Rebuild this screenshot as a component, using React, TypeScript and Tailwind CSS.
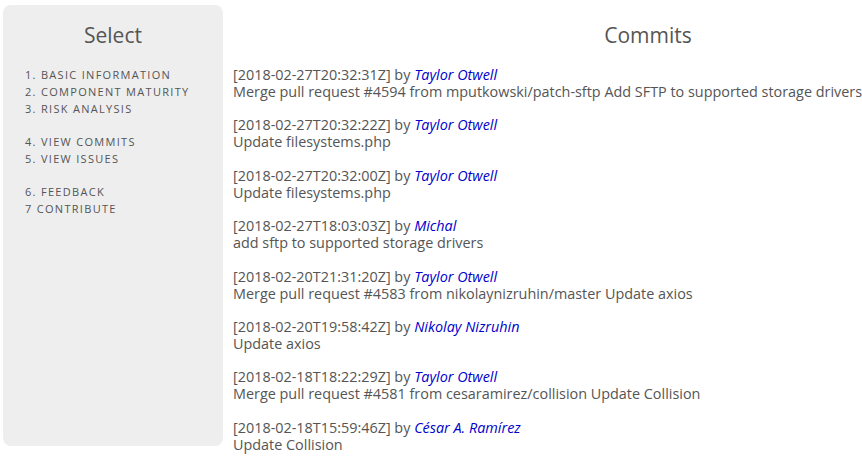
import type { ReactNode } from "react";

interface Commit {
  date: string;
  author: string;
  message: string;
}

const COMMITS: Commit[] = [
  {
    date: "2018-02-27T20:32:31Z",
    author: "Taylor Otwell",
    message: "Merge pull request #4594 from mputkowski/patch-sftp Add SFTP to supported storage drivers",
  },
  { date: "2018-02-27T20:32:22Z", author: "Taylor Otwell", message: "Update filesystems.php" },
  { date: "2018-02-27T20:32:00Z", author: "Taylor Otwell", message: "Update filesystems.php" },
  { date: "2018-02-27T18:03:03Z", author: "Michal", message: "add sftp to supported storage drivers" },
  {
    date: "2018-02-20T21:31:20Z",
    author: "Taylor Otwell",
    message: "Merge pull request #4583 from nikolaynizruhin/master Update axios",
  },
  { date: "2018-02-20T19:58:42Z", author: "Nikolay Nizruhin", message: "Update axios" },
  {
    date: "2018-02-18T18:22:29Z",
    author: "Taylor Otwell",
    message: "Merge pull request #4581 from cesaramirez/collision Update Collision",
  },
  { date: "2018-02-18T15:59:46Z", author: "César A. Ramírez", message: "Update Collision" },
];

const NAV_GROUPS: string[][] = [
  ["1. Basic information", "2. Component maturity", "3. Risk analysis"],
  ["4. View commits", "5. View issues"],
  ["6. Feedback", "7 Contribute"],
];

function NavLink({ children }: { children: ReactNode }) {
  return (
    <a href="#" className="block uppercase text-[11px] leading-[17px] tracking-[1.3px] text-[#555]">
      {children}
    </a>
  );
}

function Sidebar() {
  return (
    <aside className="w-[220px] h-[441px] shrink-0 rounded-lg bg-[#eeeeee] mt-[5px] ml-[3px]">
      <h2 className="text-center text-[21px] leading-[28px] text-[#555] mt-[16px] mb-[17px]">Select</h2>
      <nav className="pl-[22px] flex flex-col gap-4">
        {NAV_GROUPS.map((group, i) => (
          <div key={i}>
            {group.map((item) => (
              <NavLink key={item}>{item}</NavLink>
            ))}
          </div>
        ))}
      </nav>
    </aside>
  );
}

function CommitRow({ commit }: { commit: Commit }) {
  return (
    <li className="mb-[16.4px] text-[14.4px] leading-[17px] text-[#555] whitespace-nowrap">
      <div>
        [{commit.date}] by{" "}
        <a href="#" className="italic text-[#0000cc]">
          {commit.author}
        </a>
      </div>
      <div>{commit.message}</div>
    </li>
  );
}

export default function App() {
  return (
    <div
      className="w-[862px] h-[468px] overflow-hidden bg-white flex"
      style={{ fontFamily: '"Open Sans", "Liberation Sans", sans-serif' }}
    >
      <Sidebar />
      <main className="ml-[10px] min-w-0">
        <h1 className="w-[830px] text-center text-[21px] leading-[28px] text-[#555] mt-[21px] mb-[17px]">Commits</h1>
        <ul>
          {COMMITS.map((c) => (
            <CommitRow key={c.date} commit={c} />
          ))}
        </ul>
      </main>
    </div>
  );
}
